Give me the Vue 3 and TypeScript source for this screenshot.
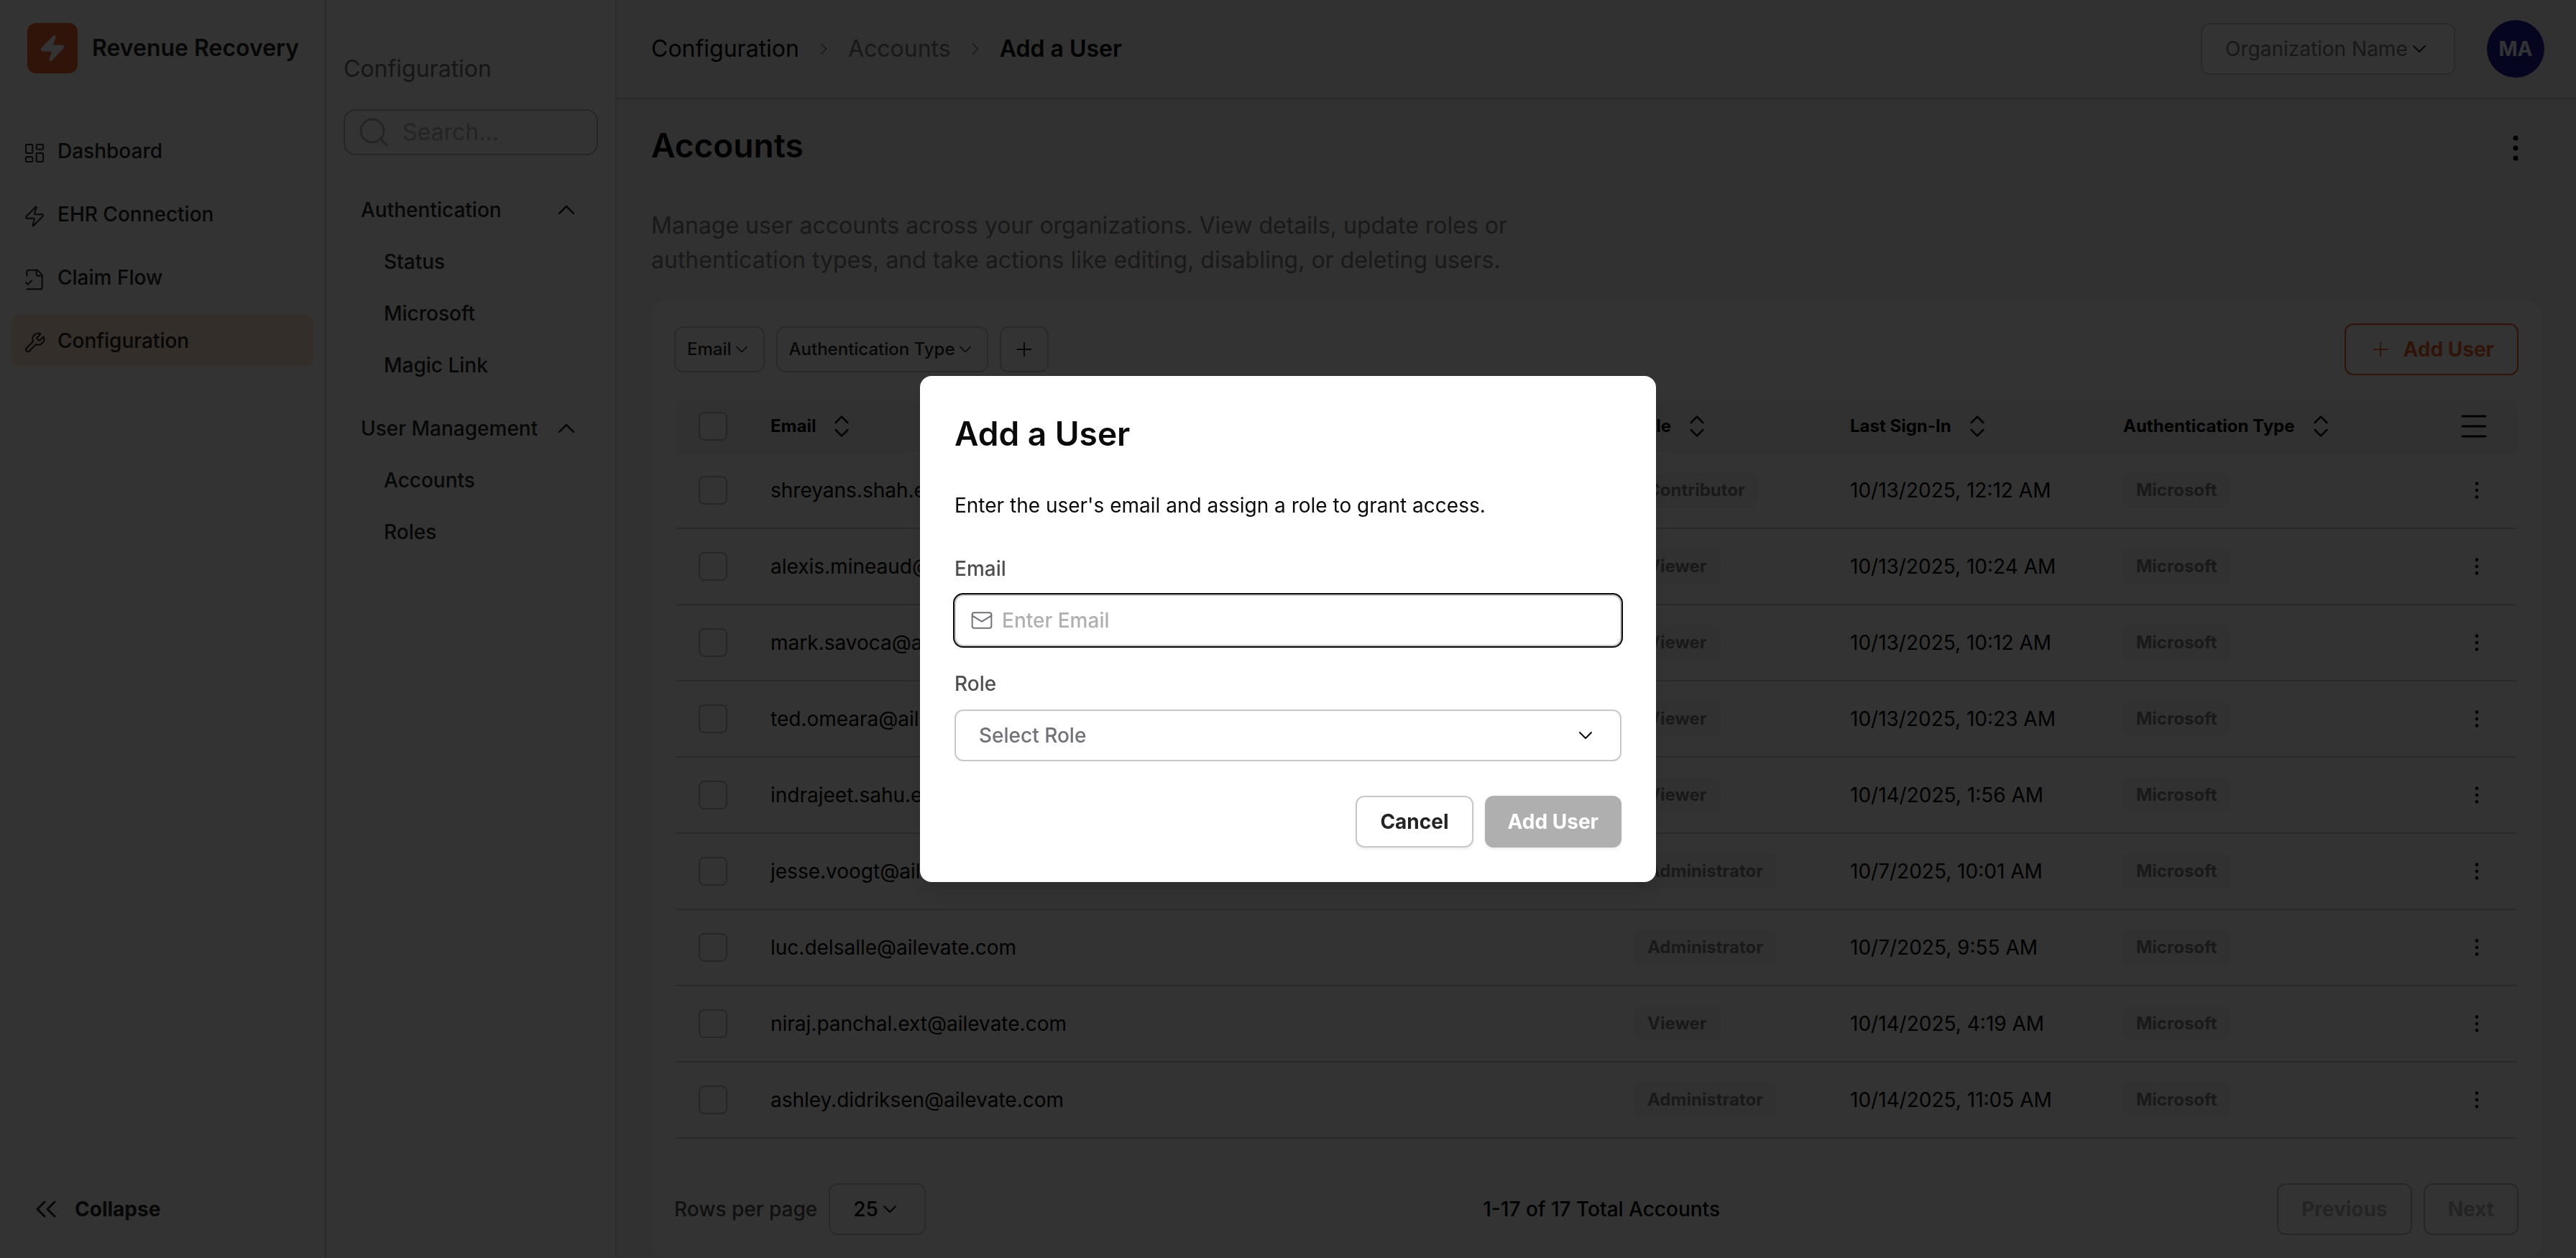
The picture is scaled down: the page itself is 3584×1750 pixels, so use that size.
<script setup lang="ts">
import { defineComponent, h, ref } from 'vue'

const icons: Record<string, string[]> = {
  dashboard: [
    'M4 3h5a1 1 0 0 1 1 1v7a1 1 0 0 1-1 1H4a1 1 0 0 1-1-1V4a1 1 0 0 1 1-1z',
    'M15 3h5a1 1 0 0 1 1 1v3a1 1 0 0 1-1 1h-5a1 1 0 0 1-1-1V4a1 1 0 0 1 1-1z',
    'M15 12h5a1 1 0 0 1 1 1v7a1 1 0 0 1-1 1h-5a1 1 0 0 1-1-1v-7a1 1 0 0 1 1-1z',
    'M4 16h5a1 1 0 0 1 1 1v3a1 1 0 0 1-1 1H4a1 1 0 0 1-1-1v-3a1 1 0 0 1 1-1z',
  ],
  zap: [
    'M4 14a1 1 0 0 1-.78-1.63l9.9-10.2a.5.5 0 0 1 .86.46l-1.92 6.02A1 1 0 0 0 13 10h7a1 1 0 0 1 .78 1.63l-9.9 10.2a.5.5 0 0 1-.86-.46l1.92-6.02A1 1 0 0 0 11 14z',
  ],
  fileCheck: [
    'M4 22h14a2 2 0 0 0 2-2V7l-5-5H6a2 2 0 0 0-2 2v4',
    'M14 2v4a2 2 0 0 0 2 2h4',
    'm3 15 2 2 4-4',
  ],
  wrench: [
    'M14.7 6.3a1 1 0 0 0 0 1.4l1.6 1.6a1 1 0 0 0 1.4 0l3.77-3.77a6 6 0 0 1-7.94 7.94l-6.91 6.91a2.12 2.12 0 0 1-3-3l6.91-6.91a6 6 0 0 1 7.94-7.94l-3.76 3.76z',
  ],
  search: ['M3 11a8 8 0 1 0 16 0a8 8 0 1 0-16 0', 'm21 21-4.3-4.3'],
  up: ['m18 15-6-6-6 6'],
  down: ['m6 9 6 6 6-6'],
  right: ['m9 18 6-6-6-6'],
  sort: ['m7 15 5 5 5-5', 'm7 9 5-5 5 5'],
  collapse: ['m11 17-5-5 5-5', 'm18 17-5-5 5-5'],
  plus: ['M5 12h14', 'M12 5v14'],
  menu: ['M4 5h16', 'M4 12h16', 'M4 19h16'],
  mail: [
    'M4 4h16a2 2 0 0 1 2 2v12a2 2 0 0 1-2 2H4a2 2 0 0 1-2-2V6a2 2 0 0 1 2-2z',
    'm22 7-8.97 5.7a1.94 1.94 0 0 1-2.06 0L2 7',
  ],
  kebab: [
    'M11 5a1 1 0 1 0 2 0a1 1 0 1 0-2 0',
    'M11 12a1 1 0 1 0 2 0a1 1 0 1 0-2 0',
    'M11 19a1 1 0 1 0 2 0a1 1 0 1 0-2 0',
  ],
}

const Icon = defineComponent({
  props: {
    name: { type: String, required: true },
    size: { type: Number, default: 32 },
    weight: { type: Number, default: 1.5 },
    filled: Boolean,
  },
  setup(props) {
    return () =>
      h(
        'svg',
        {
          width: props.size,
          height: props.size,
          viewBox: '0 0 24 24',
          fill: props.filled ? 'currentColor' : 'none',
          stroke: 'currentColor',
          'stroke-width': props.weight,
          'stroke-linecap': 'round',
          'stroke-linejoin': 'round',
          'aria-hidden': 'true',
        },
        icons[props.name].map((d) => h('path', { d })),
      )
  },
})

const nav = [
  { label: 'Dashboard', icon: 'dashboard' },
  { label: 'EHR Connection', icon: 'zap' },
  { label: 'Claim Flow', icon: 'fileCheck' },
  { label: 'Configuration', icon: 'wrench', active: true },
]

const groups = [
  { label: 'Authentication', items: ['Status', 'Microsoft', 'Magic Link'] },
  { label: 'User Management', items: ['Accounts', 'Roles'] },
]

const columns = ['Email', 'Role', 'Last Sign-In', 'Authentication Type']

const users = [
  { email: 'shreyans.shah.ext@ailevate.com', role: 'Contributor', seen: '10/13/2025, 12:12 AM' },
  { email: 'alexis.mineaud@ailevate.com', role: 'Viewer', seen: '10/13/2025, 10:24 AM' },
  { email: 'mark.savoca@ailevate.com', role: 'Viewer', seen: '10/13/2025, 10:12 AM' },
  { email: 'ted.omeara@ailevate.com', role: 'Viewer', seen: '10/13/2025, 10:23 AM' },
  { email: 'indrajeet.sahu.ext@ailevate.com', role: 'Viewer', seen: '10/14/2025, 1:56 AM' },
  { email: 'jesse.voogt@ailevate.com', role: 'Administrator', seen: '10/7/2025, 10:01 AM' },
  { email: 'luc.delsalle@ailevate.com', role: 'Administrator', seen: '10/7/2025, 9:55 AM' },
  { email: 'niraj.panchal.ext@ailevate.com', role: 'Viewer', seen: '10/14/2025, 4:19 AM' },
  { email: 'ashley.didriksen@ailevate.com', role: 'Administrator', seen: '10/14/2025, 11:05 AM' },
]

const newEmail = ref('')
const newRole = ref('')
</script>

<template>
  <div class="app">
    <aside class="sidebar">
      <div class="brand">
        <span class="logo"><Icon name="zap" :size="40" filled /></span>
        <span>Revenue Recovery</span>
      </div>
      <nav class="nav" aria-label="Main">
        <a v-for="n in nav" :key="n.label" href="#" class="nav-item" :class="{ active: n.active }">
          <Icon class="nav-icon" :name="n.icon" />{{ n.label }}
        </a>
      </nav>
      <button type="button" class="collapse"><Icon name="collapse" :size="48" />Collapse</button>
    </aside>

    <aside class="subnav">
      <h2>Configuration</h2>
      <label class="search">
        <Icon name="search" :size="48" />
        <input type="search" placeholder="Search..." aria-label="Search configuration" />
      </label>
      <section v-for="g in groups" :key="g.label" class="group">
        <button type="button" class="group-head" aria-expanded="true">
          {{ g.label }}<Icon name="up" :size="40" />
        </button>
        <a v-for="i in g.items" :key="i" href="#" class="group-item">{{ i }}</a>
      </section>
    </aside>

    <div class="content">
      <header class="topbar">
        <nav class="crumbs" aria-label="Breadcrumb">
          <a href="#">Configuration</a>
          <Icon name="right" :size="28" />
          <a href="#" class="muted">Accounts</a>
          <Icon name="right" :size="28" />
          <strong>Add a User</strong>
        </nav>
        <div class="select org">
          <select aria-label="Organization">
            <option>Organization Name</option>
          </select>
          <Icon class="select-icon" name="down" />
        </div>
        <button type="button" class="avatar">MA</button>
      </header>

      <main>
        <div class="title-row">
          <h1>Accounts</h1>
          <button type="button" class="plain" aria-label="Page actions">
            <Icon name="kebab" :size="48" filled />
          </button>
        </div>
        <p class="lead">
          Manage user accounts across your organizations. View details, update roles or
          authentication types, and take actions like editing, disabling, or deleting users.
        </p>

        <section class="card">
          <div class="toolbar">
            <button type="button" class="filter">Email<Icon name="down" :size="28" /></button>
            <button type="button" class="filter">
              Authentication Type<Icon name="down" :size="28" />
            </button>
            <button type="button" class="filter" aria-label="Add filter"><Icon name="plus" /></button>
            <button type="button" class="btn add"><Icon name="plus" />Add User</button>
          </div>

          <div class="table-wrap">
            <table>
              <colgroup>
                <col class="c-check" />
                <col />
                <col class="c-role" />
                <col class="c-seen" />
                <col class="c-type" />
                <col class="c-menu" />
              </colgroup>
              <thead>
                <tr>
                  <th><input type="checkbox" aria-label="Select all accounts" /></th>
                  <th v-for="c in columns" :key="c">
                    <button type="button" class="plain sort">{{ c }}<Icon name="sort" :size="40" /></button>
                  </th>
                  <th>
                    <button type="button" class="plain" aria-label="Choose columns">
                      <Icon name="menu" :size="48" />
                    </button>
                  </th>
                </tr>
              </thead>
              <tbody>
                <tr v-for="u in users" :key="u.email">
                  <td><input type="checkbox" :aria-label="'Select ' + u.email" /></td>
                  <td>{{ u.email }}</td>
                  <td><span class="badge">{{ u.role }}</span></td>
                  <td>{{ u.seen }}</td>
                  <td><span class="badge">Microsoft</span></td>
                  <td>
                    <button type="button" class="plain row-menu" aria-label="Account actions">
                      <Icon name="kebab" filled />
                    </button>
                  </td>
                </tr>
              </tbody>
            </table>
          </div>

          <footer class="pager">
            <div class="rows">
              <label for="rows">Rows per page</label>
              <div class="select">
                <select id="rows">
                  <option>25</option>
                </select>
                <Icon class="select-icon" name="down" />
              </div>
            </div>
            <span>1-17 of 17 Total Accounts</span>
            <div class="rows">
              <button type="button" class="btn" disabled>Previous</button>
              <button type="button" class="btn" disabled>Next</button>
            </div>
          </footer>
        </section>
      </main>
    </div>

    <div class="overlay">
      <form class="modal" role="dialog" aria-modal="true" aria-labelledby="modal-title" @submit.prevent>
        <h2 id="modal-title">Add a User</h2>
        <p>Enter the user's email and assign a role to grant access.</p>
        <div class="field">
          <label for="email">Email</label>
          <div class="input">
            <Icon name="mail" />
            <input id="email" v-model="newEmail" type="email" placeholder="Enter Email" />
          </div>
        </div>
        <div class="field">
          <label for="role">Role</label>
          <div class="select role">
            <select id="role" v-model="newRole">
              <option value="" disabled>Select Role</option>
              <option>Administrator</option>
              <option>Contributor</option>
              <option>Viewer</option>
            </select>
            <Icon class="select-icon" name="down" />
          </div>
        </div>
        <div class="actions">
          <button type="button" class="btn cancel">Cancel</button>
          <button type="submit" class="btn submit" disabled>Add User</button>
        </div>
      </form>
    </div>
  </div>
</template>

<style>
body {
  margin: 0;
  background: #f5f5f5;
}
</style>

<style scoped>
.app {
  display: flex;
  min-height: 100vh;
  font-family: Inter, sans-serif;
  font-size: 28px;
  line-height: 40px;
  color: #242424;
  background: #f5f5f5;
}
*,
*::before {
  box-sizing: border-box;
}
h1,
h2,
p {
  margin: 0;
}
a {
  color: inherit;
  text-decoration: none;
}
button,
input,
select {
  margin: 0;
  font: inherit;
  color: inherit;
}
svg {
  display: block;
  flex: none;
}

.sidebar {
  display: flex;
  flex: none;
  flex-direction: column;
  width: 454px;
  padding: 32px 16px;
  background: #fff;
  border-right: 2px solid #c8c8c8;
}
.brand {
  display: flex;
  align-items: center;
  gap: 20px;
  padding-left: 22px;
  font-size: 32px;
  font-weight: 600;
}
.logo {
  display: grid;
  place-items: center;
  width: 70px;
  height: 70px;
  color: #fff;
  background: #f0642d;
  border-radius: 12px;
}
.nav {
  display: flex;
  flex-direction: column;
  gap: 16px;
  margin-top: 72px;
}
.nav-item {
  display: flex;
  align-items: center;
  gap: 16px;
  height: 72px;
  padding: 0 16px;
  font-weight: 500;
  border-radius: 12px;
}
.nav-item.active {
  background: #ffe3d2;
}
.nav-icon {
  margin-top: 6px;
}
.collapse {
  display: flex;
  align-items: center;
  gap: 16px;
  height: 72px;
  margin-top: auto;
  padding: 0 24px;
  font-weight: 700;
  background: none;
  border: 0;
}

.subnav {
  flex: none;
  width: 404px;
  padding: 76px 24px 32px;
  background: #fff;
  border-right: 2px solid #dcdcdc;
}
.subnav h2 {
  font-size: 32px;
  font-weight: 400;
  color: #6e6e6e;
}
.search {
  display: flex;
  align-items: center;
  gap: 16px;
  height: 64px;
  margin: 36px 0 40px;
  padding: 0 16px;
  color: #b4b4b4;
  border: 2px solid #b9b9b9;
  border-radius: 16px;
}
.search input {
  flex: 1;
  min-width: 0;
  padding: 0;
  font-size: 32px;
  background: none;
  border: 0;
  outline: 0;
}
.search input::placeholder {
  color: #b1b6be;
}
.group {
  margin-bottom: 16px;
}
.group-head {
  display: flex;
  align-items: center;
  justify-content: space-between;
  width: 100%;
  height: 72px;
  padding: 0 24px;
  font-weight: 500;
  background: none;
  border: 0;
}
.group-item {
  display: block;
  padding: 16px 56px;
  font-weight: 500;
}

.content {
  flex: 1;
  min-width: 0;
}
.topbar {
  display: flex;
  align-items: center;
  gap: 44px;
  height: 138px;
  padding: 0 44px 0 48px;
  border-bottom: 2px solid #cdcdcd;
}
.crumbs {
  display: flex;
  flex: 1;
  align-items: center;
  gap: 20px;
  font-size: 32px;
  color: #000;
}
.crumbs svg,
.muted {
  color: #787878;
}
.crumbs strong {
  font-weight: 600;
}
.avatar {
  width: 80px;
  height: 80px;
  padding: 0;
  font-weight: 700;
  color: #fff;
  background: #1919a0;
  border: 0;
  border-radius: 50%;
}

.select {
  position: relative;
}
.select select {
  height: 72px;
  padding: 0 64px 0 32px;
  font-weight: 500;
  appearance: none;
  background: #fff;
  border: 2px solid #cdcdcd;
  border-radius: 12px;
  outline: 0;
}
.select-icon {
  position: absolute;
  top: 20px;
  right: 34px;
  pointer-events: none;
}
.org select {
  font-weight: 400;
  color: #787878;
}

main {
  padding: 32px 48px 0;
}
.title-row {
  display: flex;
  align-items: center;
  justify-content: space-between;
  height: 72px;
  padding-right: 12px;
  color: #000;
}
h1 {
  align-self: flex-start;
  font-size: 46px;
  font-weight: 600;
  line-height: 64px;
}
.plain {
  display: flex;
  align-items: center;
  padding: 0;
  background: none;
  border: 0;
}
.lead {
  max-width: 1200px;
  margin: 48px 0 32px;
  font-size: 32px;
  line-height: 48px;
  color: #7d7d7d;
}
.card {
  padding: 32px;
  background: #fff;
  border-radius: 24px;
}
.toolbar {
  display: flex;
  align-items: center;
  gap: 16px;
}
.filter {
  display: flex;
  align-items: center;
  height: 64px;
  padding: 0 16px;
  font-size: 24px;
  font-weight: 500;
  background: none;
  border: 2px solid #cdcdcd;
  border-radius: 12px;
}
.btn {
  display: flex;
  align-items: center;
  gap: 16px;
  height: 72px;
  padding: 0 32px;
  font-weight: 700;
  background: none;
  border: 2px solid #cdcdcd;
  border-radius: 12px;
}
.add {
  margin-left: auto;
  color: #f0642d;
  border-color: #f0642d;
}

.table-wrap {
  margin: 32px 0 60px;
  padding: 2px;
}
table {
  width: 100%;
  table-layout: fixed;
  border-spacing: 0;
  color: #000;
}
.c-check {
  width: 100px;
}
.c-role {
  width: 300px;
}
.c-seen {
  width: 380px;
}
.c-type {
  width: 464px;
}
.c-menu {
  width: 116px;
}
th {
  height: 74px;
  padding: 0 0 0 32px;
  font-size: 24px;
  font-weight: 700;
  text-align: left;
  background: #f5f5f5;
}
th:first-child {
  border-top-left-radius: 16px;
}
th:last-child {
  border-top-right-radius: 16px;
}
.sort {
  gap: 16px;
}
td {
  height: 106px;
  padding: 0 0 0 32px;
  border-bottom: 2px solid #d2d2d2;
}
input[type='checkbox'] {
  display: block;
  width: 40px;
  height: 40px;
  appearance: none;
  background: #fff;
  border: 2px solid #bebebe;
  border-radius: 8px;
}
.badge {
  display: inline-block;
  padding: 4px 18px;
  font-size: 24px;
  font-weight: 700;
  color: #7d7d7d;
  vertical-align: middle;
  background: #f5f5f5;
  border-radius: 8px;
}
.row-menu {
  padding: 0 12px;
}

.pager {
  display: flex;
  align-items: center;
  justify-content: space-between;
  font-weight: 500;
  color: #000;
}
.rows {
  display: flex;
  align-items: center;
  gap: 16px;
}
.rows label {
  color: #505050;
}
.pager .btn {
  color: #b4b4b4;
  border-color: #bebebe;
}

.overlay {
  position: fixed;
  inset: 0;
  display: grid;
  place-items: center;
  background: rgba(0, 0, 0, 0.8);
}
.modal {
  width: 1024px;
  padding: 48px;
  color: #0a0a0a;
  background: #fff;
  border-radius: 16px;
  box-shadow: 0 20px 30px rgba(0, 0, 0, 0.1);
}
.modal h2 {
  font-size: 46px;
  font-weight: 600;
  line-height: 64px;
}
.modal p {
  margin: 48px 0;
}
.field {
  display: flex;
  flex-direction: column;
  gap: 16px;
  margin-bottom: 32px;
}
.field label {
  font-weight: 500;
  color: #505050;
}
.input {
  display: flex;
  align-items: center;
  gap: 12px;
  height: 72px;
  padding: 0 20px;
  font-weight: 500;
  color: #71717a;
  border: 2px solid #c8c8c8;
  border-radius: 12px;
  outline: 2px solid #0a0a0a;
}
.input input {
  flex: 1;
  min-width: 0;
  padding: 0;
  background: none;
  border: 0;
  outline: 0;
}
.input input::placeholder {
  color: #b0b0b0;
}
.role select {
  width: 100%;
  color: #71717a;
  border-color: #c8c8c8;
}
.actions {
  display: flex;
  justify-content: flex-end;
  gap: 16px;
  margin-top: 48px;
}
.cancel,
.submit {
  box-shadow: 0 2px 4px rgba(0, 0, 0, 0.08);
}
.cancel {
  color: #242424;
  border-color: #c8c8c8;
}
.submit {
  color: #fff;
  background: #afafaf;
  border: 0;
}
</style>
